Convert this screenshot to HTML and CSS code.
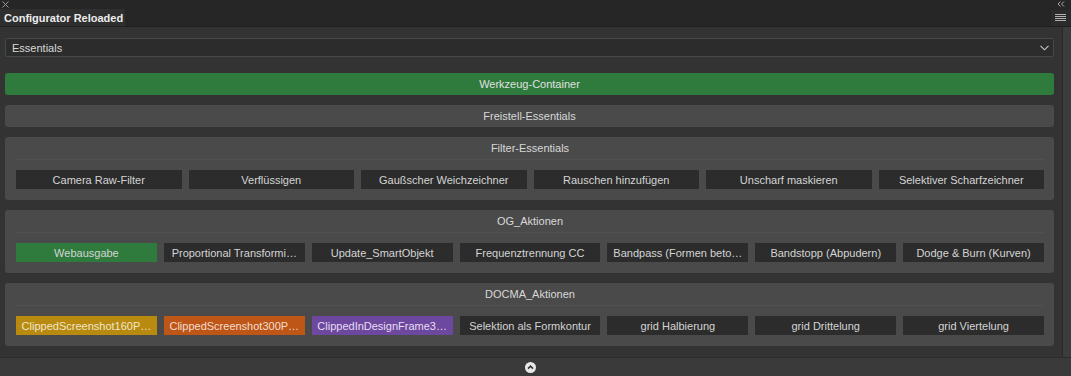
FILE: index.html
```html
<!DOCTYPE html>
<html lang="de">
<head>
<meta charset="utf-8">
<title>Configurator Reloaded</title>
<link rel="stylesheet" href="styles.css">
</head>
<body>
<div class="panel">
  <header class="titlebar">
    <div class="topline">
      <svg class="close" width="7" height="7" viewBox="0 0 7 7"><path d="M0.5 0.5L6.5 6.5M6.5 0.5L0.5 6.5" stroke="#9a9a9a" stroke-width="1"/></svg>
      <svg class="collapse" width="8" height="6" viewBox="0 0 8 6"><path d="M3.5 0.5L1 3L3.5 5.5M7 0.5L4.5 3L7 5.5" stroke="#a8a8a8" stroke-width="1" fill="none"/></svg>
    </div>
    <div class="tabrow">
      <div class="tab">Configurator Reloaded</div>
      <div class="menu">
        <svg width="11" height="8" viewBox="0 0 11 8"><path d="M0 0.5H11M0 2.5H11M0 4.5H11M0 6.5H11" stroke="#b0b0b0" stroke-width="1"/></svg>
      </div>
    </div>
  </header>

  <div class="body">
    <main class="content">
      <div class="select">
        <span>Essentials</span>
        <svg width="9" height="6" viewBox="0 0 9 6"><path d="M0.5 0.8L4.5 4.8L8.5 0.8" stroke="#c8c8c8" stroke-width="1.1" fill="none"/></svg>
      </div>

      <div class="bar bar-green">Werkzeug-Container</div>
      <div class="bar bar-gray">Freistell-Essentials</div>

      <section class="group">
        <div class="group-title">Filter-Essentials</div>
        <div class="row">
          <div class="btn">Camera Raw-Filter</div>
          <div class="btn">Verflüssigen</div>
          <div class="btn">Gaußscher Weichzeichner</div>
          <div class="btn">Rauschen hinzufügen</div>
          <div class="btn">Unscharf maskieren</div>
          <div class="btn">Selektiver Scharfzeichner</div>
        </div>
      </section>

      <section class="group">
        <div class="group-title">OG_Aktionen</div>
        <div class="row">
          <div class="btn btn-green">Webausgabe</div>
          <div class="btn">Proportional Transformi…</div>
          <div class="btn">Update_SmartObjekt</div>
          <div class="btn">Frequenztrennung CC</div>
          <div class="btn">Bandpass (Formen beto…</div>
          <div class="btn">Bandstopp (Abpudern)</div>
          <div class="btn">Dodge &amp; Burn (Kurven)</div>
        </div>
      </section>

      <section class="group">
        <div class="group-title">DOCMA_Aktionen</div>
        <div class="row">
          <div class="btn btn-yellow">ClippedScreenshot160P…</div>
          <div class="btn btn-orange">ClippedScreenshot300P…</div>
          <div class="btn btn-purple">ClippedInDesignFrame3…</div>
          <div class="btn">Selektion als Formkontur</div>
          <div class="btn">grid Halbierung</div>
          <div class="btn">grid Drittelung</div>
          <div class="btn">grid Viertelung</div>
        </div>
      </section>
    </main>
    <div class="scrollbar"></div>
  </div>

  <footer class="footer">
    <svg width="11" height="11" viewBox="0 0 11 11"><circle cx="5.5" cy="5.5" r="5.5" fill="#e8e8e8"/><path d="M3 6.6L5.5 4.1L8 6.6" stroke="#333" stroke-width="1.6" fill="none"/></svg>
  </footer>
</div>
</body>
</html>
```

FILE: styles.css
```css
html, body {
  margin: 0;
  padding: 0;
  background: #333333;
}

body {
  font-family: "Liberation Sans", Arial, Helvetica, sans-serif;
  font-size: 11px;
  color: #d6d6d6;
}

.panel {
  width: 1071px;
  height: 376px;
  display: flex;
  flex-direction: column;
  overflow: hidden;
}

.titlebar {
  background: #262626;
  height: 27px;
  border-bottom: 1px solid #1f1f1f;
  box-sizing: border-box;
  display: flex;
  flex-direction: column;
}

.topline {
  height: 9px;
  display: flex;
  justify-content: space-between;
  align-items: flex-start;
  padding: 1px 6px 0 2px;
  box-sizing: border-box;
}

.tabrow {
  height: 17px;
  display: flex;
  justify-content: space-between;
  align-items: stretch;
}

.tab {
  background: #2f2f2f;
  color: #ececec;
  font-weight: bold;
  font-size: 11px;
  padding: 2px 6px 0 4px;
  line-height: 14px;
  width: 115px;
  white-space: nowrap;
}

.menu {
  display: flex;
  align-items: center;
  padding: 0 5px 0 4px;
  margin-top: 1px;
  background: #2b2b2b;
}

.body {
  flex: 0 0 330px;
  display: flex;
  background: #333333;
}

.content {
  flex: 1;
  padding: 11px 8px 0 5px;
  display: flex;
  flex-direction: column;
}

.scrollbar {
  width: 8px;
  background: #3c3c3c;
  border-left: 1px solid #2a2a2a;
}

.select {
  height: 19px;
  box-sizing: border-box;
  border: 1px solid #484848;
  border-radius: 2px;
  background: #2c2c2c;
  display: flex;
  align-items: center;
  justify-content: space-between;
  padding: 0 4px 0 6px;
  color: #d8d8d8;
  margin-bottom: 16px;
}

.bar {
  height: 22px;
  border-radius: 3px;
  display: flex;
  align-items: center;
  justify-content: center;
  margin-bottom: 10px;
  color: #e0e0e0;
}

.bar-green {
  background: #2e7b3d;
}

.bar-gray {
  background: #4a4a4a;
  color: #d8d8d8;
}

.group {
  background: #4a4a4a;
  border-radius: 3px;
  padding: 0 10px 11px 11px;
  margin-bottom: 10px;
}

.group-title {
  height: 22px;
  display: flex;
  align-items: center;
  justify-content: center;
  border-bottom: 1px solid #515151;
  margin-bottom: 10px;
  color: #d8d8d8;
}

.row {
  display: flex;
  gap: 7px;
}

.btn {
  flex: 1 1 0;
  min-width: 0;
  height: 19px;
  background: #2c2c2c;
  display: flex;
  align-items: center;
  justify-content: center;
  white-space: nowrap;
  overflow: hidden;
  color: #d4d4d4;
}

.btn-green { background: #2e7b3d; }
.btn-yellow { background: #b88a0f; color: #f0e6cc; }
.btn-orange { background: #bd5617; color: #f3ddd0; }
.btn-purple { background: #6c489e; color: #e8def2; }

.footer {
  flex: 1;
  background: #3a3a3a;
  border-top: 1px solid #2c2c2c;
  display: flex;
  align-items: center;
  justify-content: center;
  padding-right: 11px;
}
```
